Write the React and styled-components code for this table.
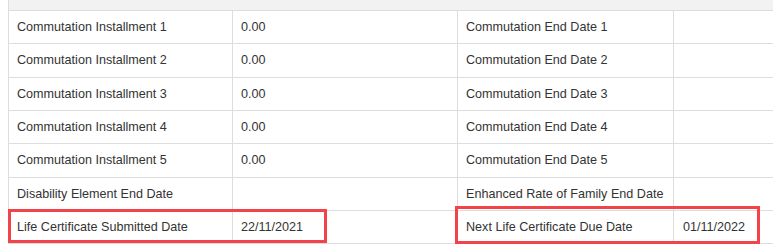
import React from 'react';
import styled, { createGlobalStyle } from 'styled-components';

const GlobalStyle = createGlobalStyle`
  html, body {
    margin: 0;
    padding: 0;
    background: #fff;
    overflow: hidden;
  }
`;

const Page = styled.div`
  position: relative;
  width: 773px;
  height: 245px;
  padding-left: 8px;
  box-sizing: border-box;
  overflow: hidden;
  font-family: Arial, 'Liberation Sans', sans-serif;
  font-size: 12.6px;
  color: #333;
`;

const Table = styled.div`
  width: 820px;
  border-left: 1px solid #ddd;
`;

const HeadStrip = styled.div`
  height: 11px;
  box-sizing: border-box;
  background: #f2f2f2;
  border-bottom: 1px solid #ddd;
`;

const Row = styled.div`
  display: grid;
  grid-template-columns: 224px 225px 216px 1fr;
  height: 33.333px;
  box-sizing: border-box;
  border-bottom: 1px solid #ddd;
  background: #fff;
`;

const Cell = styled.div`
  display: flex;
  align-items: center;
  padding: 0 ${(p) => (p.$wide ? 9 : 8)}px 0 ${(p) => (p.$wide ? 9 : 8)}px;
  border-right: 1px solid #ddd;
  white-space: nowrap;
  overflow: hidden;
`;

const Highlight = styled.div`
  position: absolute;
  left: ${(p) => p.$x}px;
  top: ${(p) => p.$y}px;
  width: ${(p) => p.$w}px;
  height: ${(p) => p.$h}px;
  box-sizing: border-box;
  border: 3px solid #f2424a;
  pointer-events: none;
`;

const rows = [
  ['Commutation Installment 1', '0.00', 'Commutation End Date 1', ''],
  ['Commutation Installment 2', '0.00', 'Commutation End Date 2', ''],
  ['Commutation Installment 3', '0.00', 'Commutation End Date 3', ''],
  ['Commutation Installment 4', '0.00', 'Commutation End Date 4', ''],
  ['Commutation Installment 5', '0.00', 'Commutation End Date 5', ''],
  ['Disability Element End Date', '', 'Enhanced Rate of Family End Date', ''],
  ['Life Certificate Submitted Date', '22/11/2021', 'Next Life Certificate Due Date', '01/11/2022'],
];

const App = () => (
  <>
    <GlobalStyle />
    <Page>
      <Table>
        <HeadStrip />
        {rows.map((r) => (
          <Row key={r[0]}>
            <Cell>{r[0]}</Cell>
            <Cell>{r[1]}</Cell>
            <Cell>{r[2]}</Cell>
            <Cell $wide>{r[3]}</Cell>
          </Row>
        ))}
      </Table>
      <Highlight $x={8} $y={209} $w={319} $h={34} />
      <Highlight $x={455} $y={206} $w={305} $h={38} />
    </Page>
  </>
);

export default App;
